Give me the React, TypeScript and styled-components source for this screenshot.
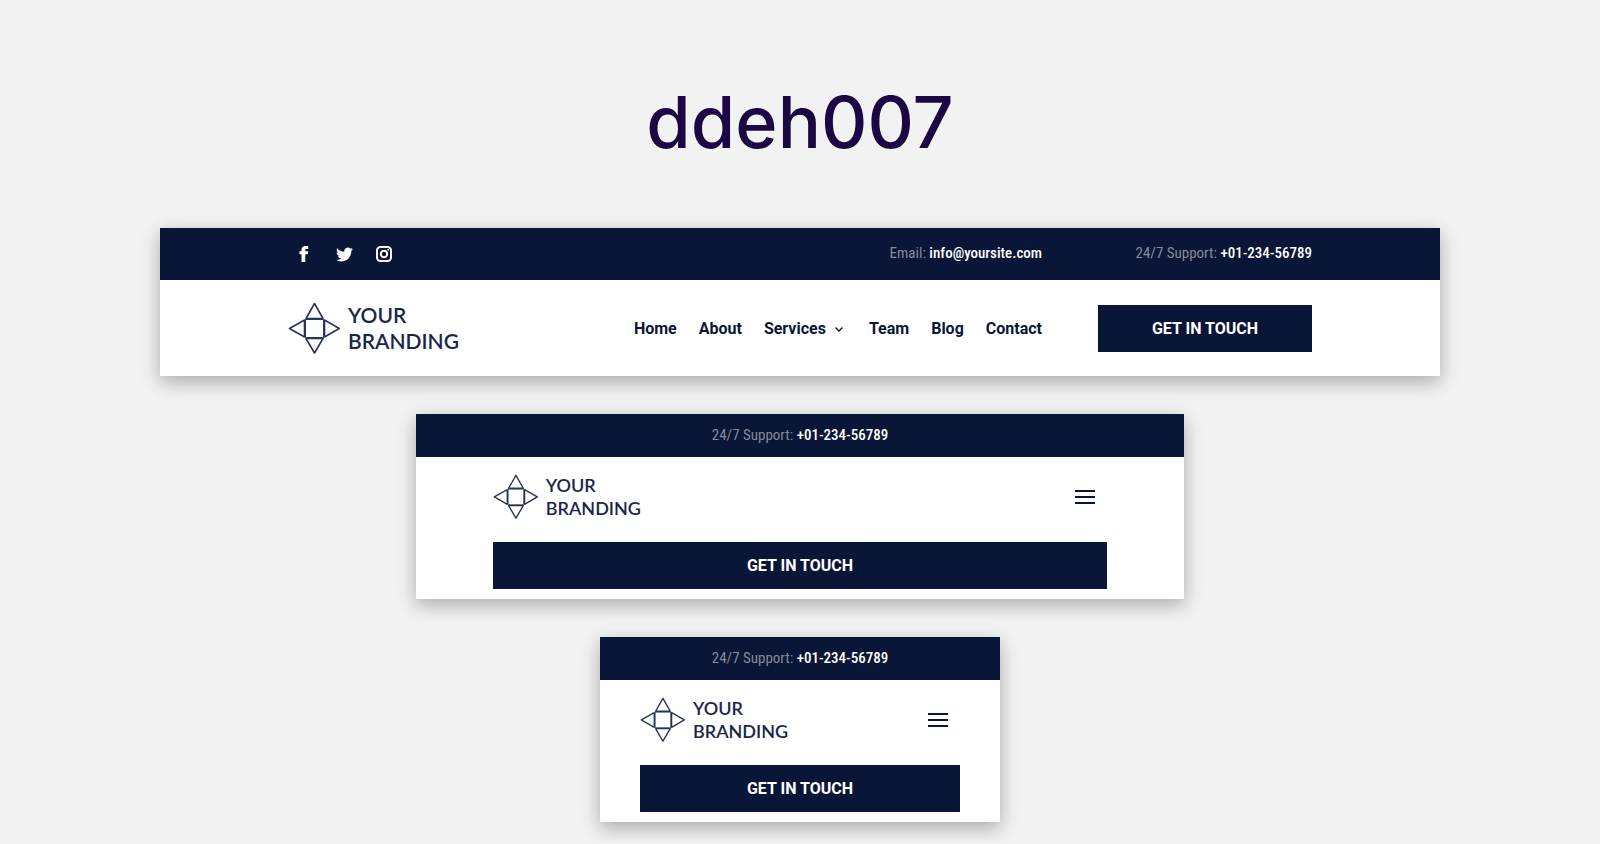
import React from "react";
import styled, { createGlobalStyle } from "styled-components";

const navy = "#0a1638";

const GlobalStyle = createGlobalStyle`
  *, *::before, *::after { box-sizing: border-box; }
  body {
    margin: 0;
    background: #f2f2f2;
    color: ${navy};
    font-family: Roboto, "Liberation Sans", sans-serif;
  }
  a { color: inherit; text-decoration: none; }
`;

const Page = styled.main`
  display: flex;
  flex-direction: column;
  align-items: center;
  gap: 38px;
  padding: 86px 0 21px;
`;

const Title = styled.h1`
  margin: 0 0 32px;
  font-family: Inter, "Liberation Sans", sans-serif;
  font-size: 72px;
  line-height: 72px;
  font-weight: 500;
  color: #1b0743;
`;

const Card = styled.header<{ $width: string }>`
  width: ${(p) => p.$width};
  background: #fff;
  box-shadow: 0 6px 18px rgba(0, 0, 0, 0.3);
`;

const TopBar = styled.div<{ $compact?: boolean }>`
  display: flex;
  align-items: center;
  justify-content: ${(p) => (p.$compact ? "center" : "space-between")};
  height: ${(p) => (p.$compact ? 43 : 52)}px;
  padding: 0 10%;
  background: ${navy};
`;

const Socials = styled.div`
  display: flex;
  gap: 8px;
`;

const SocialLink = styled.a`
  display: flex;
  align-items: center;
  justify-content: center;
  width: 32px;
  height: 32px;
  color: #fff;
`;

const Contacts = styled.div`
  display: flex;
`;

const Support = styled.div`
  width: 270px;
  text-align: right;
`;

const Info = styled.span`
  padding-bottom: 2px;
  font-family: "Roboto Condensed", Roboto, sans-serif;
  font-size: 15px;
  line-height: 22px;
  color: #858a9b;
  white-space: nowrap;

  a { color: #fff; font-weight: 500; }
`;

const MainRow = styled.div`
  display: flex;
  align-items: center;
  height: 96px;
  padding: 0 10%;
`;

const Brand = styled.a<{ $compact?: boolean }>`
  display: flex;
  align-items: center;
  gap: 8px;
  margin-right: auto;
  padding-bottom: 1px;
  font-family: Lato, "Liberation Sans", sans-serif;
  font-weight: 600;
  font-size: ${(p) => (p.$compact ? 18 : 21)}px;
  line-height: ${(p) => (p.$compact ? 23 : 26)}px;
  color: #1a2649;

  svg {
    width: ${(p) => (p.$compact ? 45 : 52)}px;
    height: ${(p) => (p.$compact ? 45 : 52)}px;
  }
`;

const Nav = styled.nav`
  display: flex;
  gap: 22px;
  margin-right: 56px;
  padding-top: 1px;
  font-size: 16px;
  line-height: 24px;
  font-weight: 700;

  a { display: flex; align-items: center; }
  svg { margin: 2px 4px 0 9px; }
`;

const CallButton = styled.button<{ $wide?: boolean }>`
  width: ${(p) => (p.$wide ? "100%" : "214px")};
  height: 47px;
  border: 0;
  padding: 0;
  background: ${navy};
  color: #fff;
  font-family: inherit;
  font-size: 16px;
  font-weight: 700;
  cursor: pointer;
`;

const CompactBody = styled.div`
  padding: 0 10% 10px;
`;

const CompactRow = styled.div`
  display: flex;
  align-items: center;
  height: 80px;
  margin-bottom: 5px;
`;

const MenuButton = styled.button`
  display: flex;
  border: 0;
  padding: 8px 11px 8px 8px;
  background: none;
  color: ${navy};
  cursor: pointer;
`;

const Logo = ({ compact }: { compact?: boolean }) => (
  <Brand href="#" $compact={compact}>
    <svg viewBox="0 0 52 52" fill="none" stroke="#28345a" strokeLinejoin="round" aria-hidden="true">
      <rect x="17.5" y="17.5" width="18" height="18" strokeWidth="1" />
      <path strokeWidth="1.6" d="M26.5 1.5 35 16.5H18ZM26.5 51 35 36.5H18ZM1.5 26.5 16.5 18V35ZM51.2 26.5 36.5 18V35Z" />
    </svg>
    <span>YOUR<br />BRANDING</span>
  </Brand>
);

const SupportLine = () => (
  <Info>24/7 Support: <a href="tel:+0123456789">+01-234-56789</a></Info>
);

const CompactHeader = ({ width }: { width: string }) => (
  <Card $width={width}>
    <TopBar $compact><SupportLine /></TopBar>
    <CompactBody>
      <CompactRow>
        <Logo compact />
        <MenuButton aria-label="Open menu">
          <svg width="22" height="14" viewBox="0 0 22 14" fill="currentColor" aria-hidden="true">
            <path d="M1 0H21V2H1ZM1 6H21V8H1ZM1 12H21V14H1Z" />
          </svg>
        </MenuButton>
      </CompactRow>
      <CallButton $wide>GET IN TOUCH</CallButton>
    </CompactBody>
  </Card>
);

export default function App() {
  return (
    <>
      <GlobalStyle />
      <Page>
        <Title>ddeh007</Title>
        <Card $width="80%">
          <TopBar>
            <Socials>
              <SocialLink href="#" aria-label="Facebook">
                <svg width="16" height="16" viewBox="0 0 16 16" fill="currentColor" aria-hidden="true">
                  <path d="M5.5 16V8.3H3.4V5.2H5.5V3.8C5.5 1.3 6.8 0 9.3 0H12.2V3H10.4C9.6 3 9.3 3.3 9.3 4V5.2H12.2L11.8 8.3H9.3V16Z" />
                </svg>
              </SocialLink>
              <SocialLink href="#" aria-label="Twitter">
                <svg width="17" height="17" viewBox="0 0 24 24" fill="currentColor" aria-hidden="true">
                  <path d="M23.95 4.57a10 10 0 0 1-2.82.77 4.96 4.96 0 0 0 2.16-2.72c-.95.55-2 .95-3.13 1.18a4.92 4.92 0 0 0-8.38 4.48C7.69 8.1 4.07 6.13 1.64 3.16a4.82 4.82 0 0 0-.67 2.48c0 1.71.87 3.21 2.19 4.1a4.9 4.9 0 0 1-2.23-.62v.06a4.92 4.92 0 0 0 3.95 4.83 5 5 0 0 1-2.21.08 4.94 4.94 0 0 0 4.6 3.42A9.87 9.87 0 0 1 0 19.54a13.99 13.99 0 0 0 7.56 2.21c9.05 0 14-7.5 14-13.98 0-.21 0-.42-.02-.63a9.94 9.94 0 0 0 2.46-2.55z" />
                </svg>
              </SocialLink>
              <SocialLink href="#" aria-label="Instagram">
                <svg width="16" height="16" viewBox="0 0 16 16" fill="none" stroke="currentColor" strokeWidth="2" aria-hidden="true">
                  <rect x="1" y="1" width="14" height="14" rx="3.5" />
                  <circle cx="8" cy="8" r="3.2" />
                  <circle cx="12.2" cy="3.8" r="1" fill="currentColor" stroke="none" />
                </svg>
              </SocialLink>
            </Socials>
            <Contacts>
              <Info>Email: <a href="mailto:info@yoursite.com">info@yoursite.com</a></Info>
              <Support><SupportLine /></Support>
            </Contacts>
          </TopBar>
          <MainRow>
            <Logo />
            <Nav>
              <a href="#">Home</a>
              <a href="#">About</a>
              <a href="#">
                Services
                <svg width="8" height="5" viewBox="0 0 8 5" fill="none" stroke="currentColor" strokeWidth="1.4" aria-hidden="true">
                  <path d="M.5 .5 4 4 7.5 .5" />
                </svg>
              </a>
              <a href="#">Team</a>
              <a href="#">Blog</a>
              <a href="#">Contact</a>
            </Nav>
            <CallButton>GET IN TOUCH</CallButton>
          </MainRow>
        </Card>
        <CompactHeader width="48%" />
        <CompactHeader width="25%" />
      </Page>
    </>
  );
}
